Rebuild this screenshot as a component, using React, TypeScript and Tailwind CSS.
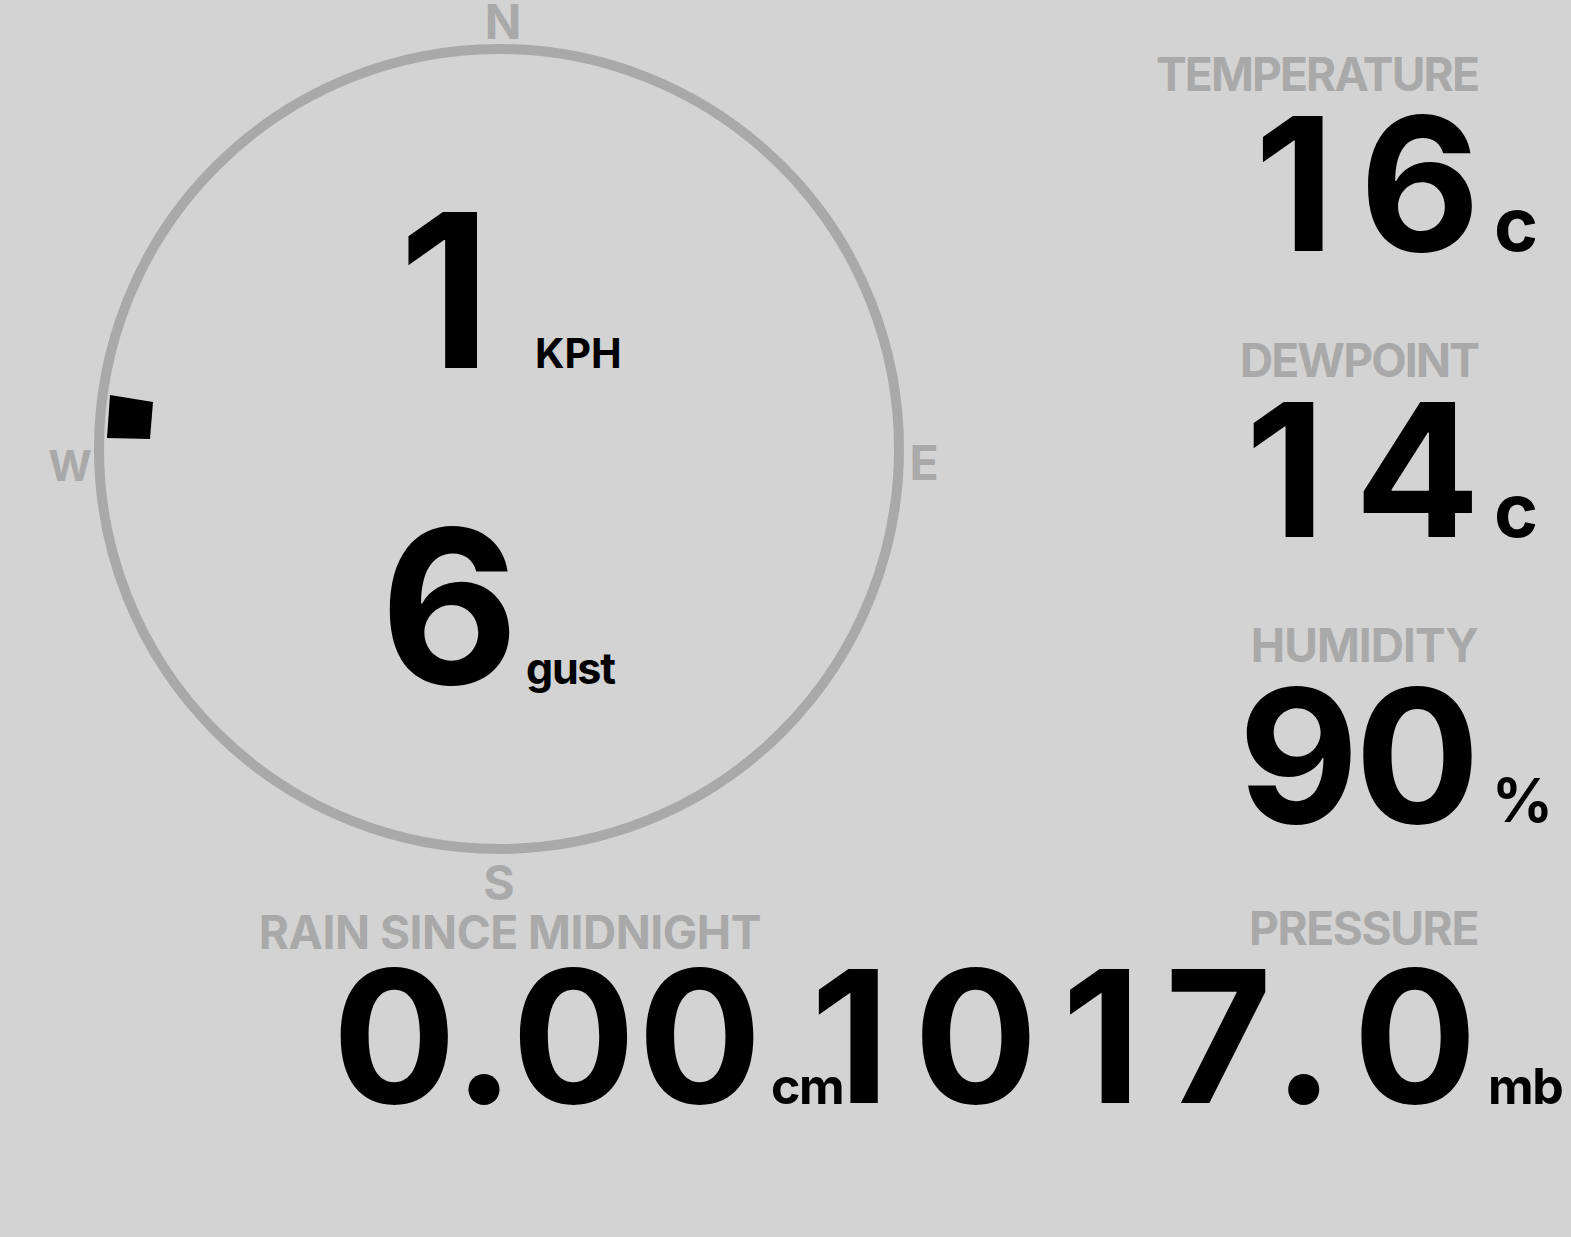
import type { ReactNode } from "react";

// Weather station dashboard: wind compass on the left, readings on the right.

const FONT = "font-['Inter','Liberation_Sans',sans-serif] font-bold";

type ReadingProps = {
  label: string;
  value: string;
  unit: ReactNode;
  labelClass?: string;
  valueClass: string;
  unitClass: string;
  gapClass: string;
  className?: string;
};

function Reading({
  label,
  value,
  unit,
  labelClass = "tracking-[-0.04em]",
  valueClass,
  unitClass,
  gapClass,
  className = "",
}: ReadingProps) {
  return (
    <div className={`flex flex-col items-end ${gapClass} ${className}`}>
      <p
        className={`text-[46px] leading-[0.727] whitespace-nowrap text-[#a9a9a9] ${labelClass}`}
      >
        {label}
      </p>
      <div className="flex items-end">
        <span
          className={`leading-[0.727] whitespace-nowrap text-black ${valueClass}`}
        >
          {value}
        </span>
        {/* zero-width so the unit hangs past the column edge */}
        <span
          className={`w-0 whitespace-nowrap leading-[0.727] text-black ${unitClass}`}
        >
          {unit}
        </span>
      </div>
    </div>
  );
}

function Compass() {
  return (
    <div className="relative h-[905px] w-[998px] shrink-0">
      <svg
        className="absolute inset-0"
        width="998"
        height="905"
        viewBox="0 0 998 905"
      >
        <circle
          cx="499"
          cy="449"
          r="400"
          fill="none"
          stroke="#a9a9a9"
          strokeWidth="10"
        />
        <polygon points="110,395 153,402 150,439 107,438" fill="#000" />
        <g
          fill="#a9a9a9"
          fontFamily="Inter, 'Liberation Sans', sans-serif"
          fontWeight="700"
        >
          <text x="503" y="39" textAnchor="middle" fontSize="48">
            N
          </text>
          <text x="924" y="480" textAnchor="middle" fontSize="48">
            E
          </text>
          <text x="499" y="900" textAnchor="middle" fontSize="48">
            S
          </text>
          <text x="70" y="481" textAnchor="middle" fontSize="42">
            W
          </text>
        </g>
      </svg>

      <div className="relative flex flex-col gap-[160px] pl-[380px] pt-[213px]">
        <div className="flex items-end">
          <span className="w-[130px] text-center text-[214px] leading-[0.727]">
            1
          </span>
          <span className="ml-[25px] text-[41px] leading-[0.727]">KPH</span>
        </div>
        <div className="flex items-end">
          <span className="w-[130px] text-center text-[214px] leading-[0.727]">
            6
          </span>
          <span className="ml-[16px] text-[43px] leading-[0.727] tracking-[-0.03em]">
            gust
          </span>
        </div>
      </div>
    </div>
  );
}

export default function App() {
  return (
    <div className={`h-[1237px] w-full overflow-hidden bg-[#d3d3d3] ${FONT}`}>
      <div className="flex">
        <Compass />
        <div className="flex flex-1 flex-col items-end gap-[92px] pr-[93px] pt-[58px]">
          <Reading
            label="TEMPERATURE"
            value="16"
            unit="c"
            valueClass="text-[186px] tracking-[0.133em] -mr-[27px]"
            unitClass="indent-[16px] text-[75px]"
            gapClass="gap-[25px]"
          />
          <Reading
            label="DEWPOINT"
            value="14"
            unit="c"
            valueClass="text-[186px] tracking-[0.155em] -mr-[31px]"
            unitClass="indent-[16px] text-[75px]"
            gapClass="gap-[25px]"
          />
          <Reading
            label="HUMIDITY"
            value="90"
            unit="%"
            labelClass="tracking-[-0.02em]"
            valueClass="text-[186px] tracking-[-0.023em] mr-[2px]"
            unitClass="indent-[14px] text-[60px]"
            gapClass="gap-[25px]"
          />
        </div>
      </div>

      <div className="flex items-start">
        <div className="w-[761px] shrink-0">
          <Reading
            label="RAIN SINCE MIDNIGHT"
            labelClass="tracking-[-0.01em]"
            value="0.00"
            unit="cm"
            valueClass="text-[184px] tracking-[0.012em] -mr-[3px]"
            unitClass="indent-[10px] text-[50px] tracking-[-0.03em]"
            gapClass="gap-[21px]"
            className="mt-[11px]"
          />
        </div>
        <div className="flex flex-1 justify-end pr-[93px]">
          <Reading
            label="PRESSURE"
            labelClass="tracking-[-0.03em]"
            value="1017.0"
            unit="mb"
            valueClass="text-[184px] tracking-[0.13em] -mr-[23px]"
            unitClass="indent-[10px] text-[50px] tracking-[-0.03em]"
            gapClass="gap-[25px]"
            className="mt-[7px]"
          />
        </div>
      </div>
    </div>
  );
}
